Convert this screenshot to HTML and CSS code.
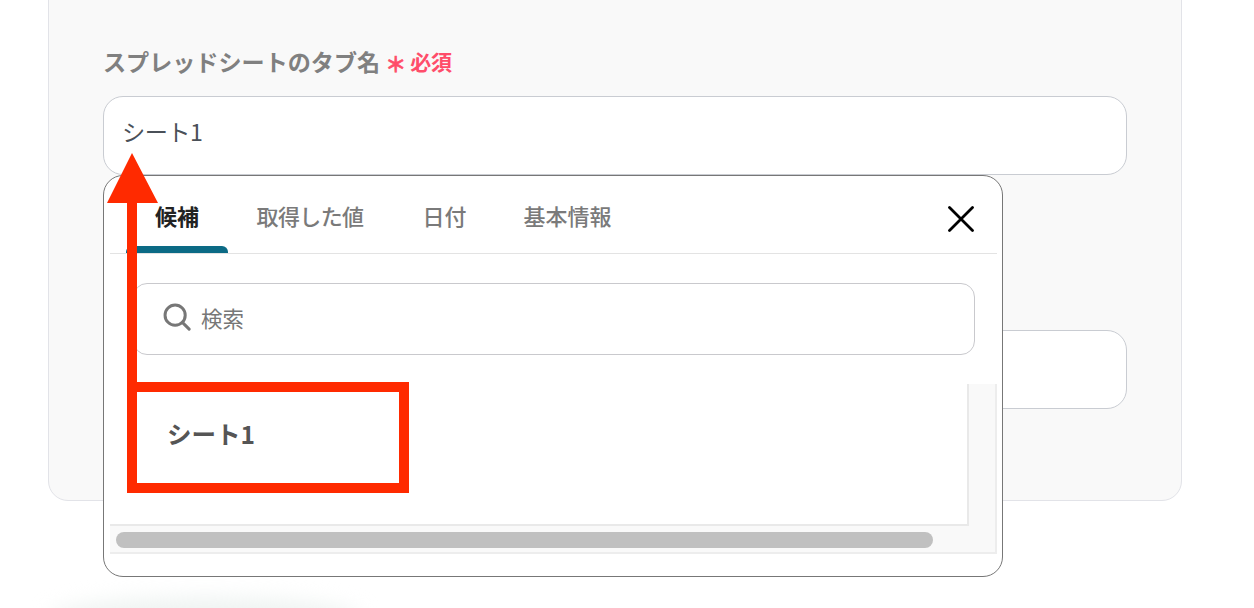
FILE: index.html
```html
<!DOCTYPE html>
<html lang="ja">
<head>
    <meta charset="UTF-8">
    <meta name="viewport" content="width=device-width, initial-scale=1.0">
    <title>スプレッドシートのタブ名</title>
    <link rel="stylesheet" href="styles.css">
</head>
<body>
    <div class="page">
        <div class="card">
            <div class="field-label">
                <span>スプレッドシートのタブ名</span>
                <span class="required"><span class="asterisk">＊</span>必須</span>
            </div>

            <div class="field">
                <div class="text-input"><span class="value">シート1</span></div>

                <div class="picker">
                    <div class="tabs">
                        <div class="tab active">候補</div>
                        <div class="tab tight">取得した値</div>
                        <div class="tab">日付</div>
                        <div class="tab">基本情報</div>
                        <svg class="close-icon" width="26" height="26" viewBox="0 0 26 26">
                            <path d="M1.5 1.5 L24.5 24.5 M24.5 1.5 L1.5 24.5" fill="none" stroke="#000" stroke-width="2.8" stroke-linecap="round"/>
                        </svg>
                    </div>

                    <div class="search">
                        <svg class="search-icon" width="28" height="28" viewBox="0 0 30 30">
                            <circle cx="13" cy="13" r="10.8" fill="none" stroke="#777" stroke-width="3.2"/>
                            <path d="M21 21 L28 28" fill="none" stroke="#777" stroke-width="3.2" stroke-linecap="round"/>
                        </svg>
                        <span>検索</span>
                    </div>

                    <div class="scroll-area">
                        <div class="scroll-body">
                            <div class="list">
                                <div class="list-item">シート1</div>
                            </div>
                            <div class="gutter"></div>
                        </div>
                        <div class="track">
                            <div class="thumb"></div>
                        </div>
                    </div>
                </div>
            </div>

            <div class="text-input second"></div>
        </div>

        <div class="glow"></div>

        <!-- red annotation drawn over the screenshot -->
        <svg class="annotation" width="1254" height="608" viewBox="0 0 1254 608">
            <rect x="132" y="387" width="272" height="101" fill="none" stroke="#ff2a00" stroke-width="10"/>
            <path d="M127 387 V203 H107 L132 153 L158 203 H137 V387 Z" fill="#ff2a00"/>
        </svg>
    </div>
</body>
</html>
```

FILE: styles.css
```css
* {
    box-sizing: border-box;
}

body {
    margin: 0;
    background-color: #fff;
    font-family: 'Noto Sans CJK JP', 'Noto Sans', sans-serif;
}

.page {
    position: relative;
    width: 1254px;
    height: 608px;
    overflow: hidden;
}

.card {
    width: 1134px;
    margin: -41px 0 0 48px;
    padding: 85px 54px 91px;
    background-color: #f9f9f9;
    border: 1px solid #e2e3e8;
    border-radius: 20px;
}

.field-label {
    display: flex;
    align-items: center;
    height: 32px;
    margin-bottom: 19px;
    font-size: 23.1px;
    font-weight: 700;
    color: #808080;
}

.required {
    display: flex;
    align-items: center;
    margin-left: 5px;
    font-size: 21px;
    color: #ff4d6a;
}

.asterisk {
    margin-right: 4px;
    padding-top: 4px;
    -webkit-text-stroke: 0.6px #ff4d6a;
}

.field {
    position: relative;
}

.text-input {
    display: flex;
    align-items: center;
    height: 79px;
    padding: 0 18px 10px;
    background-color: #fff;
    border: 1px solid #c9ccd2;
    border-radius: 20px;
    font-size: 23.2px;
    letter-spacing: -0.5px;
    color: #4a5058;
}

.text-input.second {
    margin-top: 155px;
}

.picker {
    position: absolute;
    top: 79px;
    left: 0;
    width: 900px;
    height: 402px;
    padding: 0 5px 0 6px;
    background-color: #fff;
    border: 1px solid #777;
    border-radius: 20px;
    z-index: 2;
}

.tabs {
    position: relative;
    display: flex;
    height: 78px;
    padding-left: 16px;
    border-bottom: 1px solid #e3e3e3;
}

.tab {
    position: relative;
    display: flex;
    align-items: center;
    height: 77px;
    padding: 0 28.5px;
    font-size: 22px;
    font-weight: 500;
    color: #7a7a7a;
}

.tab.tight {
    padding-right: 30.5px;
    letter-spacing: -0.6px;
}

.tab.active {
    padding: 0 29px;
    color: #222;
    font-weight: 700;
}

.tab.active::after {
    content: "";
    position: absolute;
    left: 0;
    right: 0;
    bottom: 0;
    height: 7px;
    background-color: #0b6a85;
    border-radius: 6px 6px 0 0;
}

.close-icon {
    position: absolute;
    top: 30px;
    right: 23px;
}

.search {
    display: flex;
    align-items: center;
    height: 72px;
    margin: 29px 22px 0 23px;
    padding: 0 0 4px 29px;
    background-color: #fff;
    border: 1px solid #c9c9cd;
    border-radius: 14px;
    font-size: 21.5px;
    color: #777;
}

.search-icon {
    margin-right: 10px;
}

.scroll-area {
    display: flex;
    flex-direction: column;
    height: 170px;
    margin-top: 29px;
}

.scroll-body {
    display: flex;
    flex: 1;
}

.list {
    width: 859px;
    background-color: #fff;
    border-right: 2px solid #e9e9e9;
    border-bottom: 2px solid #e9e9e9;
}

.list-item {
    padding: 32px 0 0 57px;
    font-size: 24.5px;
    font-weight: 700;
    color: #555;
}

.gutter {
    flex: 1;
    background-color: #f9f9f9;
    border-right: 2px solid #ededed;
}

.track {
    height: 28px;
    padding: 6px 6px 0;
    background-color: #f9f9f9;
    border-right: 2px solid #ededed;
    border-bottom: 2px solid #ededed;
}

.thumb {
    width: 817px;
    height: 16px;
    background-color: #c0c0c0;
    border-radius: 8px;
}

.glow {
    position: absolute;
    left: 50px;
    top: 598px;
    width: 310px;
    height: 40px;
    background-color: #eef3f1;
    border-radius: 50%;
    filter: blur(10px);
}

.annotation {
    position: absolute;
    top: 0;
    left: 0;
    z-index: 3;
}
```
